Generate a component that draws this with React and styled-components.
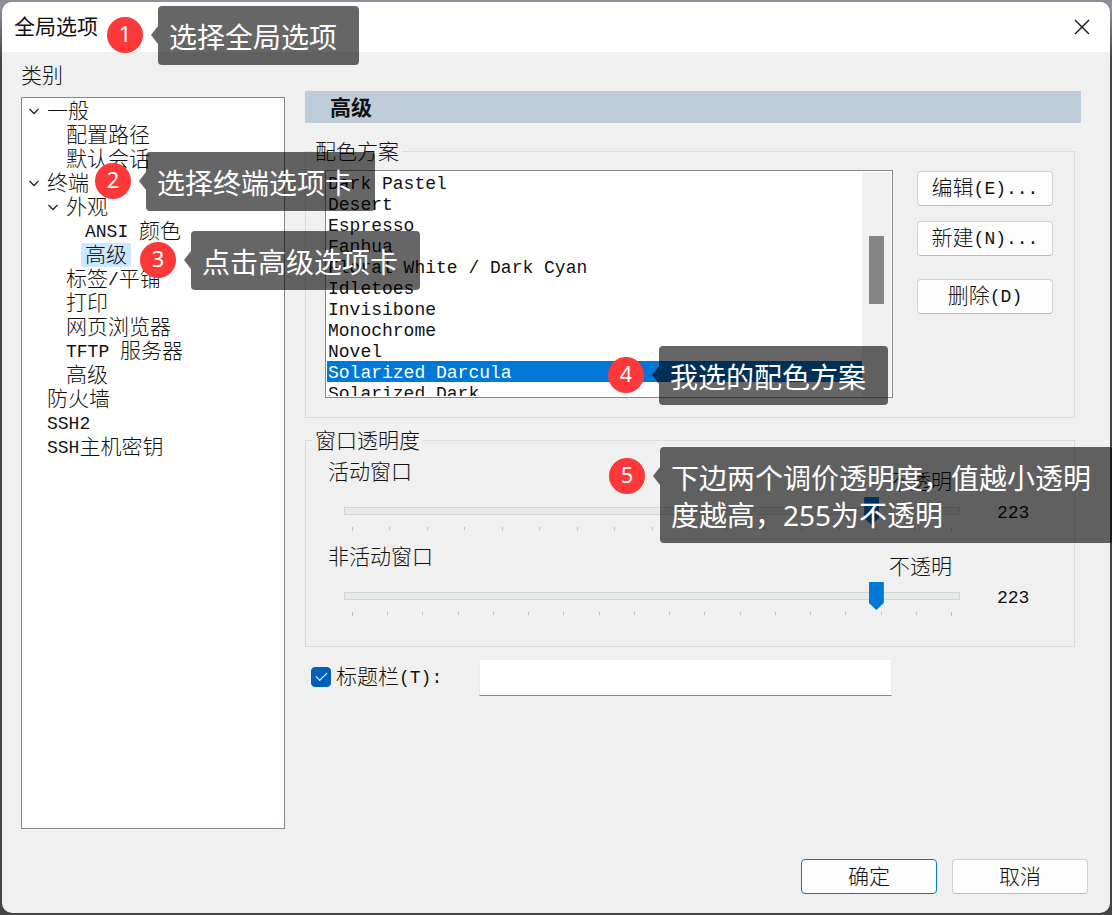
import React, { useState } from "react";
import styled, { createGlobalStyle } from "styled-components";

const treeItems = [
  { id: "general", label: "一般", level: 0, open: true },
  { id: "paths", label: "配置路径", level: 1 },
  { id: "session", label: "默认会话", level: 1 },
  { id: "terminal", label: "终端", level: 0, open: true },
  { id: "look", label: "外观", level: 1, open: true },
  { id: "ansi", label: "ANSI 颜色", level: 2 },
  { id: "look-adv", label: "高级", level: 2 },
  { id: "tabs", label: "标签/平铺", level: 1 },
  { id: "print", label: "打印", level: 1 },
  { id: "web", label: "网页浏览器", level: 1 },
  { id: "tftp", label: "TFTP 服务器", level: 1 },
  { id: "term-adv", label: "高级", level: 1 },
  { id: "firewall", label: "防火墙", level: 0 },
  { id: "ssh2", label: "SSH2", level: 0 },
  { id: "hostkeys", label: "SSH主机密钥", level: 0 },
];

const schemes = [
  "Dark Pastel",
  "Desert",
  "Espresso",
  "Fanhua",
  "Floral White / Dark Cyan",
  "Idletoes",
  "Invisibone",
  "Monochrome",
  "Novel",
  "Solarized Darcula",
  "Solarized Dark",
];

const callouts = [
  { n: 1, x: 107, y: 6, text: "选择全局选项" },
  { n: 2, x: 95, y: 152, text: "选择终端选项卡" },
  { n: 3, x: 140, y: 231, text: "点击高级选项卡" },
  { n: 4, x: 608, y: 346, text: "我选的配色方案" },
  {
    n: 5,
    x: 609,
    y: 447,
    text: "下边两个调价透明度，值越小透明\n度越高，255为不透明",
  },
];

// latin runs are set smaller than the hanzi around them
const Mixed = ({ children }) =>
  children
    .split(/([\x20-\x7e]+)/)
    .filter(Boolean)
    .map((part, i) =>
      /^[\x20-\x7e]/.test(part) ? <Latin key={i}>{part}</Latin> : part
    );

const Opacity = ({ id, label, min }) => {
  const [value, setValue] = useState(223);
  const ticks = Array((255 - min) / 15 + 1).fill(0);

  return (
    <OpacityBlock>
      <OpacityHead>
        <label htmlFor={id}>{label}</label>
        <Opaque>不透明</Opaque>
      </OpacityHead>
      <Range
        id={id}
        type="range"
        min={min}
        max={255}
        value={value}
        onChange={(e) => setValue(Number(e.target.value))}
      />
      <Value htmlFor={id}>{value}</Value>
      <Ticks>
        {ticks.map((_, i) => (
          <Tick key={i} />
        ))}
      </Ticks>
    </OpacityBlock>
  );
};

const App = () => {
  const [category, setCategory] = useState("look-adv");
  const [scheme, setScheme] = useState("Solarized Darcula");
  const [titleBar, setTitleBar] = useState(true);
  const [title, setTitle] = useState("");

  return (
    <Desktop>
      <GlobalStyle />
      <Dialog role="dialog" aria-labelledby="dialog-title">
        <TitleBar>
          <Title id="dialog-title">全局选项</Title>
          <Close aria-label="关闭">
            <svg width="16" height="16" viewBox="0 0 16 16">
              <path d="M1 1 L15 15 M15 1 L1 15" stroke="#111" strokeWidth="1.4" />
            </svg>
          </Close>
        </TitleBar>

        <Body>
          <Sidebar>
            <SidebarLabel id="tree-label">类别</SidebarLabel>
            <Tree role="tree" aria-labelledby="tree-label">
              {treeItems.map((item) => (
                <TreeRow
                  key={item.id}
                  role="treeitem"
                  aria-level={item.level + 1}
                  aria-expanded={item.open}
                  aria-selected={item.id === category}
                  $level={item.level}
                  onClick={() => setCategory(item.id)}
                >
                  <Chevron>
                    {item.open && (
                      <svg width="12" height="12" viewBox="0 0 12 12">
                        <path
                          d="M1.5 4 L6 8.5 L10.5 4"
                          fill="none"
                          stroke="#222"
                          strokeWidth="1.3"
                        />
                      </svg>
                    )}
                  </Chevron>
                  <TreeLabel $selected={item.id === category}>
                    <Mixed>{item.label}</Mixed>
                  </TreeLabel>
                </TreeRow>
              ))}
            </Tree>
          </Sidebar>

          <Page>
            <PageTitle>高级</PageTitle>

            <Group>
              <Legend>配色方案</Legend>
              <SchemeRow>
                <ListBox>
                  <Schemes role="listbox" aria-label="配色方案">
                    {schemes.map((name) => (
                      <Scheme
                        key={name}
                        role="option"
                        aria-selected={name === scheme}
                        $selected={name === scheme}
                        onClick={() => setScheme(name)}
                      >
                        {name}
                      </Scheme>
                    ))}
                  </Schemes>
                  <ScrollTrack>
                    <ScrollThumb />
                  </ScrollTrack>
                </ListBox>
                <SchemeButtons>
                  <Button>
                    <Mixed>编辑(E)...</Mixed>
                  </Button>
                  <Button>
                    <Mixed>新建(N)...</Mixed>
                  </Button>
                  <DeleteButton>
                    <Mixed>删除(D)</Mixed>
                  </DeleteButton>
                </SchemeButtons>
              </SchemeRow>
            </Group>

            <Group>
              <Legend>窗口透明度</Legend>
              <OpacityList>
                <Opacity id="active" label="活动窗口" min={15} />
                <Opacity id="inactive" label="非活动窗口" min={0} />
              </OpacityList>
            </Group>

            <TitleRow>
              <CheckLabel>
                <Check
                  type="checkbox"
                  checked={titleBar}
                  onChange={(e) => setTitleBar(e.target.checked)}
                />
                <span>
                  <Mixed>标题栏(T):</Mixed>
                </span>
              </CheckLabel>
              <TextBox
                type="text"
                aria-label="标题栏"
                value={title}
                onChange={(e) => setTitle(e.target.value)}
              />
            </TitleRow>
          </Page>
        </Body>

        <Footer>
          <Button $primary>确定</Button>
          <Button>取消</Button>
        </Footer>
      </Dialog>

      {callouts.map((c) => (
        <Callout key={c.n} $x={c.x} $y={c.y}>
          <Badge>{c.n}</Badge>
          <Arrow />
          <Bubble>{c.text}</Bubble>
        </Callout>
      ))}
    </Desktop>
  );
};

export default App;

const GlobalStyle = createGlobalStyle`
  * {
    box-sizing: border-box;
  }

  body {
    margin: 0;
    background: #444;
    color: #111;
    font-family: "Noto Sans CJK SC", sans-serif;
    font-size: 21px;
    font-weight: 300;
    line-height: 18px;
  }

  button, input {
    font: inherit;
    color: inherit;
  }
`;

const Latin = styled.span`
  font-family: "Liberation Mono", monospace;
  font-size: 18px;
  vertical-align: 1px;
  white-space: pre;
`;

const Desktop = styled.div`
  position: relative;
  display: flex;
  min-height: 100vh;
  padding: 2px;
  overflow: hidden;
  background: linear-gradient(#8f8c9b 0, #8f8c9b 8px, #444 60px);
`;

const Dialog = styled.main`
  flex: 1;
  display: flex;
  flex-direction: column;
  border-radius: 10px;
  background: #f0f0f0;
  overflow: hidden;
`;

const TitleBar = styled.header`
  display: flex;
  align-items: center;
  justify-content: space-between;
  height: 50px;
  padding: 0 16px 0 12px;
  background: #fff;
`;

const Title = styled.h1`
  margin: 0;
  padding-bottom: 4px;
  font-size: 21px;
  font-weight: 400;
`;

const Close = styled.button`
  display: flex;
  padding: 4px;
  border: 0;
  background: none;
`;

const Body = styled.div`
  flex: 1;
  display: grid;
  grid-template-columns: 264px 1fr;
  gap: 20px;
  padding: 0 29px 0 19px;
`;

const Sidebar = styled.nav`
  display: flex;
  flex-direction: column;
  padding-top: 13px;
`;

const SidebarLabel = styled.div`
  height: 32px;
`;

const Tree = styled.ul`
  flex: 1;
  margin: 0;
  padding: 1px 0;
  border: 1px solid #828790;
  background: #fff;
  list-style: none;
`;

const TreeRow = styled.li`
  display: flex;
  height: 24px;
  padding-left: ${(p) => 6 + p.$level * 19}px;
  line-height: 20px;
  white-space: nowrap;
  cursor: default;
`;

const Chevron = styled.span`
  display: flex;
  align-items: center;
  width: 15px;
`;

const TreeLabel = styled.span`
  padding: 0 4px;
  border-radius: 2px;
  background: ${(p) => (p.$selected ? "#cce8ff" : "transparent")};
`;

const Page = styled.section`
  padding-top: 39px;
`;

const PageTitle = styled.h2`
  margin: 0 0 18px;
  padding: 0 25px 2px;
  background: #bfcddb;
  font-size: 21px;
  font-weight: 700;
  line-height: 30px;
`;

const Group = styled.fieldset`
  min-width: 0;
  margin: 0 6px 12px 0;
  padding: 0;
  border: 1px solid #dcdcdc;
`;

const Legend = styled.legend`
  height: 21px;
  margin-left: 6px;
  padding: 0 3px;
  line-height: 19px;
`;

const SchemeRow = styled.div`
  display: flex;
  gap: 24px;
  padding: 8px 21px 19px 19px;
`;

const ListBox = styled.div`
  flex: 1;
  display: flex;
  min-width: 0;
  height: 228px;
  padding: 1px;
  border: 1px solid #828790;
  background: #fff;
`;

const Schemes = styled.ul`
  flex: 1;
  margin: 0;
  padding: 0;
  overflow: hidden;
  list-style: none;
  font-family: "Liberation Mono", monospace;
  font-size: 18px;
  font-weight: 400;
`;

const Scheme = styled.li`
  height: 21px;
  padding: 0 1px;
  line-height: 24px;
  white-space: nowrap;
  color: ${(p) => (p.$selected ? "#fff" : "inherit")};
  background: ${(p) => (p.$selected ? "#0078d7" : "transparent")};
  cursor: default;
`;

const ScrollTrack = styled.div`
  width: 29px;
  padding: 64px 7px 0;
  background: #f0f0f0;
`;

const ScrollThumb = styled.div`
  height: 68px;
  background: #858585;
`;

const SchemeButtons = styled.div`
  display: flex;
  flex-direction: column;
  gap: 15px;
  padding-top: 1px;
`;

const Button = styled.button`
  width: 136px;
  height: 35px;
  padding: 0 0 3px;
  border: 1px solid ${(p) => (p.$primary ? "#0078d4" : "#d0d0d0")};
  border-bottom-color: ${(p) => (p.$primary ? "#0078d4" : "#bababa")};
  border-radius: 4px;
  background: #fdfdfd;
  white-space: nowrap;
`;

const DeleteButton = styled(Button)`
  margin-top: 8px;
`;

const OpacityList = styled.div`
  padding: 10px 0 15px 22px;
`;

const OpacityBlock = styled.div`
  display: grid;
  grid-template-columns: 1fr 114px;
  grid-template-rows: 36px 28px 21px;
`;

const OpacityHead = styled.div`
  grid-column: 1;
  display: flex;
  justify-content: space-between;
  padding-right: 8px;
`;

const Opaque = styled.span`
  padding-top: 10px;
`;

const Range = styled.input`
  grid-column: 1;
  appearance: none;
  height: 28px;
  min-width: 0;
  margin: 0 0 0 16px;
  background: none;

  &::-webkit-slider-runnable-track {
    height: 8px;
    border: 1px solid #d0d5d5;
    background: #e7eaea;
  }

  &::-webkit-slider-thumb {
    appearance: none;
    width: 15px;
    height: 28px;
    margin-top: -11px;
    background: #0078d7;
    clip-path: polygon(0 0, 100% 0, 100% 75%, 50% 100%, 0 75%);
  }
`;

const Value = styled.output`
  grid-column: 2;
  align-self: center;
  padding: 4px 0 0 37px;
  font-family: "Liberation Mono", monospace;
  font-size: 18px;
`;

const Ticks = styled.div`
  grid-column: 1;
  display: flex;
  justify-content: space-between;
  padding: 2px 8px 0 24px;
`;

const Tick = styled.span`
  width: 1px;
  height: 3px;
  background: #c0c0c0;

  &:first-child,
  &:last-child {
    height: 4px;
  }
`;

const TitleRow = styled.div`
  display: flex;
  align-items: center;
  padding: 0 189px 0 6px;
`;

const CheckLabel = styled.label`
  display: flex;
  align-items: center;
  gap: 5px;
  flex: 0 0 168px;
  padding-bottom: 2px;
`;

const Check = styled.input`
  appearance: none;
  width: 20px;
  height: 20px;
  margin: 0;
  display: grid;
  place-items: center;
  border: 1px solid #005fb8;
  border-radius: 4px;
  background: #fff;

  &:checked {
    background: #005fb8;
  }

  &:checked::after {
    content: "";
    width: 10px;
    height: 5px;
    margin-bottom: 3px;
    border: solid #fff;
    border-width: 0 0 1px 1px;
    transform: rotate(-45deg);
  }
`;

const TextBox = styled.input`
  flex: 1;
  min-width: 0;
  height: 37px;
  padding: 0 6px;
  border: 1px solid #ececec;
  border-bottom-color: #868686;
  background: #fff;
`;

const Footer = styled.footer`
  display: flex;
  justify-content: flex-end;
  gap: 15px;
  padding: 30px 22px 19px;
`;

// numbered notes that float over the dialog
const Callout = styled.div`
  position: absolute;
  left: ${(p) => p.$x}px;
  top: ${(p) => p.$y}px;
  display: flex;
  align-items: flex-start;
  color: #fff;
  font-family: "Noto Sans", "Noto Sans CJK SC", sans-serif;
  font-weight: 400;
`;

const Badge = styled.span`
  width: 36px;
  height: 36px;
  margin: 11px 8px 0 0;
  border-radius: 50%;
  background: #fc3838;
  font-size: 22px;
  line-height: 32px;
  text-align: center;
`;

const Arrow = styled.span`
  width: 7px;
  height: 18px;
  margin-top: 20px;
  background: rgba(0, 0, 0, 0.6);
  clip-path: polygon(0 50%, 100% 0, 100% 100%);
`;

const Bubble = styled.span`
  padding: 13px 22px 9px 11px;
  border-radius: 4px;
  background: rgba(0, 0, 0, 0.6);
  font-size: 28px;
  line-height: 37px;
  white-space: pre;
`;
